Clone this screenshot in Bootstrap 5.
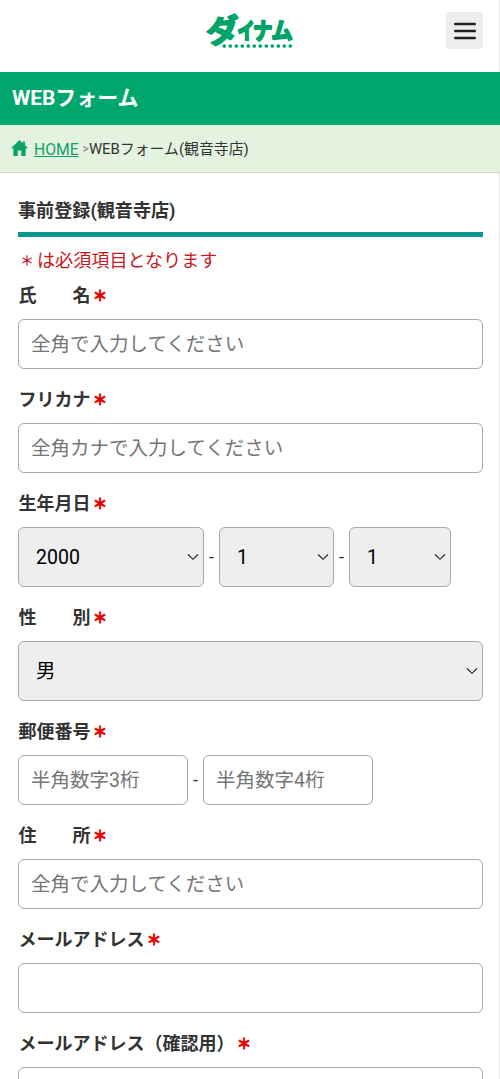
<!DOCTYPE html>
<html lang="ja">
<head>
<meta charset="utf-8">
<meta name="viewport" content="width=device-width, initial-scale=1">
<title>WEBフォーム</title>
<link href="https://cdn.jsdelivr.net/npm/bootstrap@5.3.0/dist/css/bootstrap.min.css" rel="stylesheet">
<style>
html,body{overflow:hidden;height:1079px}
body{font-family:Roboto,"Noto Sans CJK JP",sans-serif;font-size:18px;line-height:27px;color:#333;background:#fff}
.site-head{height:72px;border-right:1px solid #e6e6e6}
.logo-svg{left:190px;top:0}
.menu-btn{width:37px;height:37px;margin:12px 16px 0 0;background:#ededed;border-radius:3px}
.page-title{height:53px;background:#00a76d;font-size:20.9px;padding:1px 0 0 12px}
.crumbs{height:48px;background:#e4f3df;border-bottom:1px solid #cfd6cc;font-size:14.9px;padding:1px 0 0 11px}
.crumbs a{color:#0ba368;font-size:15.7px}
.crumbs svg{margin:-2px 6px 0 0}
.crumbs .gt{font-size:12px;color:#777;margin:0 0 0 4px}
.content{height:906px;padding:0 16px 0 18px;border-right:1px solid #e6e6e6}
.form-title{font-size:18.1px;line-height:27px;height:64px;padding-top:24px;border-bottom:5px solid #0f9690}
.note{color:#c9171e;height:27px;margin-top:10px;font-size:18.1px}
.note .star{display:inline-block;width:18px;text-align:center;font-size:14.5px;line-height:20px;vertical-align:1px;font-weight:500;margin-right:1px}
.form-label{height:27px;line-height:28px;margin:17px 0 10px;padding-left:.5px;font-weight:700}
.first .form-label{margin-top:8px}
.req{display:inline-block;width:19px;text-align:center;color:#e60000;font-size:14.5px;line-height:20px;vertical-align:1px;-webkit-text-stroke:.8px #e60000}
.form-control{height:50px;border:1px solid #aaa;border-radius:6px;font-size:19.5px;padding:0 12px}
.form-control::placeholder{color:#757575;opacity:1}
.form-select{height:60px;border:1px solid #aaa;border-radius:6px;background-color:#eee;color:#000;font-size:19.5px;padding:1px 20px 0 17px;background-size:12px 8px;background-position:right 4px center;background-image:url("data:image/svg+xml,%3Csvg xmlns='http://www.w3.org/2000/svg' viewBox='0 0 12 8'%3E%3Cpath d='M1 1.5l5 4.8 5-4.8' fill='none' stroke='%23222' stroke-width='1.1'/%3E%3C/svg%3E")}
.sep{width:15px;text-align:center;flex:none;margin-top:-2px}
.w-year{width:186px}.w-month{width:115px}.w-day{width:102px}.w-zip{width:170px}
</style>
</head>
<body>
<header class="site-head position-relative d-flex justify-content-end align-items-start">
  <svg class="logo-svg position-absolute" width="120" height="66" viewBox="190 0 120 66" role="img" aria-label="ダイナム">
    <g fill="#00a468" stroke="#00a468" stroke-width="1.7" stroke-linejoin="round" stroke-linecap="round" font-family="'Noto Sans CJK JP',sans-serif" font-weight="700">
      <text transform="translate(207 43.500) rotate(-5) scale(1.080 1)" font-size="31">ダ</text>
      <text transform="translate(237.500 38.500) scale(1 1.320)" font-size="17">イ</text>
      <text transform="translate(253 38.500) scale(1 1.180)" font-size="19.500">ナ</text>
      <text transform="translate(271.300 38.500) scale(1 1.080)" font-size="21.500">ム</text>
    </g>
    <path d="M224.300 46h67" stroke="#00a468" stroke-width="3.700" stroke-linecap="round" stroke-dasharray="0 6"/>
  </svg>
  <button class="menu-btn btn p-0 border-0 d-flex align-items-center justify-content-center" aria-label="メニュー"><svg width="22" height="18" viewBox="0 0 22 18"><path d="M1.200 2h19.600M1.200 9h19.600M1.200 16h19.600" stroke="#222" stroke-width="2.400" stroke-linecap="round"/></svg></button>
</header>
<h1 class="page-title d-flex align-items-center text-white fw-bold m-0">WEBフォーム</h1>
<nav class="crumbs d-flex align-items-center">
  <svg width="17" height="16" viewBox="0 0 17 16"><path fill="#0ba368" d="M8.500 0L11.800 3.200V1.500H14V5.300L17 8.300H14.700V16H10.300V10.500H6.700V16H2.300V8.300H0Z"/></svg>
  <a href="#">HOME</a><span class="gt">&gt;</span><span>WEBフォーム(観音寺店)</span>
</nav>
<main class="content">
  <h2 class="form-title fw-bold m-0">事前登録(観音寺店)</h2>
  <p class="note mb-0"><span class="star">＊</span>は必須項目となります</p>
  <form>
    <div class="first"><label class="form-label d-block">氏　　名<span class="req">＊</span></label><input class="form-control" placeholder="全角で入力してください"></div>
    <div><label class="form-label d-block">フリカナ<span class="req">＊</span></label><input class="form-control" placeholder="全角カナで入力してください"></div>
    <div><label class="form-label d-block">生年月日<span class="req">＊</span></label>
      <div class="d-flex align-items-center"><select class="form-select w-year"><option>2000</option></select><span class="sep">-</span><select class="form-select w-month"><option>1</option></select><span class="sep">-</span><select class="form-select w-day"><option>1</option></select></div></div>
    <div><label class="form-label d-block">性　　別<span class="req">＊</span></label><select class="form-select"><option>男</option></select></div>
    <div><label class="form-label d-block">郵便番号<span class="req">＊</span></label>
      <div class="d-flex align-items-center"><input class="form-control w-zip" placeholder="半角数字3桁"><span class="sep">-</span><input class="form-control w-zip" placeholder="半角数字4桁"></div></div>
    <div><label class="form-label d-block">住　　所<span class="req">＊</span></label><input class="form-control" placeholder="全角で入力してください"></div>
    <div><label class="form-label d-block">メールアドレス<span class="req">＊</span></label><input class="form-control"></div>
    <div><label class="form-label d-block">メールアドレス（確認用）<span class="req">＊</span></label><input class="form-control"></div>
  </form>
</main>
<script src="https://cdn.jsdelivr.net/npm/bootstrap@5.3.0/dist/js/bootstrap.bundle.min.js"></script>
</body>
</html>
